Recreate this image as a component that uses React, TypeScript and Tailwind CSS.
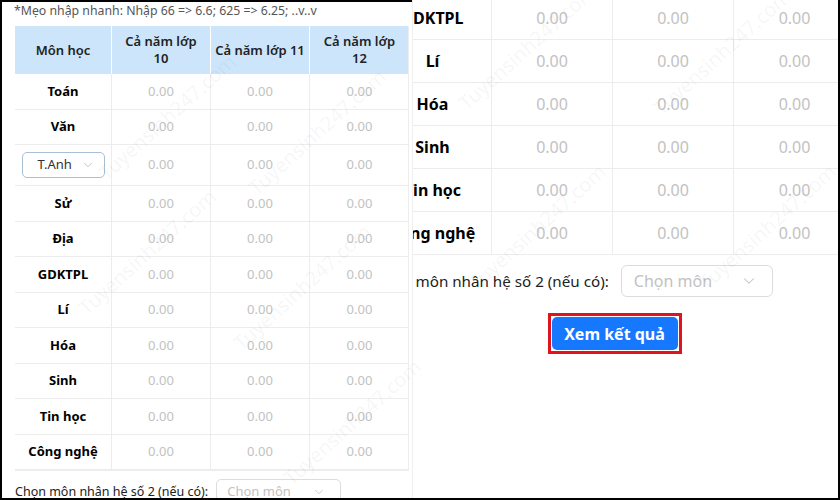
import { ChevronDown } from 'lucide-react';

const subjects = ['Toán', 'Văn', 'T.Anh', 'Sử', 'Địa', 'GDKTPL', 'Lí', 'Hóa', 'Sinh', 'Tin học', 'Công nghệ'];
const zoomedSubjects = ['GDKTPL', 'Lí', 'Hóa', 'Sinh', 'Tin học', 'Công nghệ'];

const font = { fontFamily: '"Segoe UI", "Noto Sans", sans-serif' };

const Watermark = ({ className }: { className: string }) => (
    <span
        className={`pointer-events-none absolute origin-top-left -rotate-[42deg] whitespace-nowrap text-[20px] text-black/[0.055] ${className}`}
    >
        Tuyensinh247.com
    </span>
);

const SmallTable = () => (
    <div className="w-[394px] border-r border-b border-[#ededed]">
        {/* Header */}
        <div className="grid grid-cols-[97px_99px_99px_99px] h-[48px] bg-[#cde5fa] text-[13px] font-semibold text-[#222] leading-[17px]">
            <div className="flex items-center justify-center border-r border-white">Môn học</div>
            <div className="flex items-center justify-center text-center border-r border-white">Cả năm lớp<br />10</div>
            <div className="flex items-center justify-center whitespace-nowrap border-r border-white">Cả năm lớp 11</div>
            <div className="flex items-center justify-center text-center">Cả năm lớp<br />12</div>
        </div>

        {/* Rows */}
        {subjects.map((s) => (
            <div
                key={s}
                className={`grid grid-cols-[97px_99px_99px_99px] border-b border-[#ececec] text-[13px] ${s === 'T.Anh' ? 'h-[41px]' : 'h-[35.5px]'}`}
            >
                <div className="flex items-center justify-center border-r border-[#ececec] font-bold text-black">
                    {s === 'T.Anh' ? (
                        <div className="flex items-center justify-between w-[83px] h-[26px] px-[9px] rounded-[5px] border border-[#a9bfd6] font-normal text-[#333]">
                            <span className="pl-[6px]">T.Anh</span>
                            <ChevronDown size={14} strokeWidth={1.4} className="text-[#b5b5b5]" />
                        </div>
                    ) : s}
                </div>
                <div className="flex items-center justify-center border-r border-[#ececec] text-[#c2c2c2]">0.00</div>
                <div className="flex items-center justify-center border-r border-[#ececec] text-[#c2c2c2]">0.00</div>
                <div className="flex items-center justify-center text-[#c2c2c2]">0.00</div>
            </div>
        ))}
    </div>
);

const ZoomTable = () => (
    <div className="w-[481px]">
        {zoomedSubjects.map((s) => (
            <div key={s} className="grid grid-cols-[118px_121px_121px_121px] h-[43px] border-b border-[#ececec] text-[16px]">
                <div className="flex items-center justify-center border-r border-[#ececec] font-bold text-black">{s}</div>
                <div className="flex items-center justify-center border-r border-[#ececec] text-[#c2c2c2]">0.00</div>
                <div className="flex items-center justify-center border-r border-[#ececec] text-[#c2c2c2]">0.00</div>
                <div className="flex items-center justify-center text-[#c2c2c2]">0.00</div>
            </div>
        ))}
    </div>
);

export default function App() {
    return (
        <div style={font} className="relative flex w-[840px] h-[500px] overflow-hidden bg-white border-l-2 border-r-2 border-b-2 border-black">
            {/* Left: full form */}
            <div className="w-[410px] shrink-0 h-full overflow-hidden border-t-2 border-black">
                <div className="h-[24px] pl-[12px] pt-[1px] text-[12.3px] leading-[16px] text-[#555]">
                    *Mẹo nhập nhanh: Nhập 66 =&gt; 6.6; 625 =&gt; 6.25; ..v..v
                </div>
                <div className="pl-[13px]">
                    <SmallTable />
                    <div className="flex items-center gap-[8px] mt-[8px]">
                        <span className="text-[12.5px] text-[#222]">Chọn môn nhân hệ số 2 (nếu có):</span>
                        <div className="flex items-center justify-between w-[125px] h-[26px] shrink-0 px-[10px] rounded-[5px] border border-[#dcdcdc] text-[13px] text-[#c2c2c2]">
                            <span>Chọn môn</span>
                            <ChevronDown size={14} strokeWidth={1.4} className="text-[#c2c2c2] mr-[4px]" />
                        </div>
                    </div>
                </div>
            </div>

            {/* Right: zoomed view */}
            <div className="flex-1 h-full overflow-hidden border-l border-[#efefef]">
                <div className="-ml-[39px] -mt-[3px] w-[481px]">
                    <ZoomTable />
                    <div className="flex items-center gap-[12px] mt-[10px]">
                        <span className="whitespace-nowrap text-[15.2px] text-[#222]">Chọn môn nhân hệ số 2 (nếu có):</span>
                        <div className="flex items-center justify-between w-[152px] h-[32px] shrink-0 px-[12px] rounded-[6px] border border-[#dcdcdc] text-[16px] text-[#c2c2c2]">
                            <span>Chọn môn</span>
                            <ChevronDown size={18} strokeWidth={1.4} className="text-[#c2c2c2] mr-[2px]" />
                        </div>
                    </div>
                    <div className="flex justify-center mt-[16px]">
                        <div className="p-[1px] border-[3px] border-[#e0141e]">
                            <button className="w-[126px] h-[33px] rounded-[5px] bg-[#1677ff] text-white text-[16px] font-bold">
                                Xem kết quả
                            </button>
                        </div>
                    </div>
                </div>
            </div>

            {/* Watermarks */}
            <Watermark className="left-[70px] top-[300px]" />
            <Watermark className="left-[90px] top-[165px]" />
            <Watermark className="left-[225px] top-[335px]" />
            <Watermark className="left-[240px] top-[180px]" />
            <Watermark className="left-[275px] top-[470px]" />
            <Watermark className="left-[450px] top-[95px]" />
            <Watermark className="left-[645px] top-[100px]" />
            <Watermark className="left-[460px] top-[275px]" />
            <Watermark className="left-[690px] top-[275px]" />
        </div>
    );
}
